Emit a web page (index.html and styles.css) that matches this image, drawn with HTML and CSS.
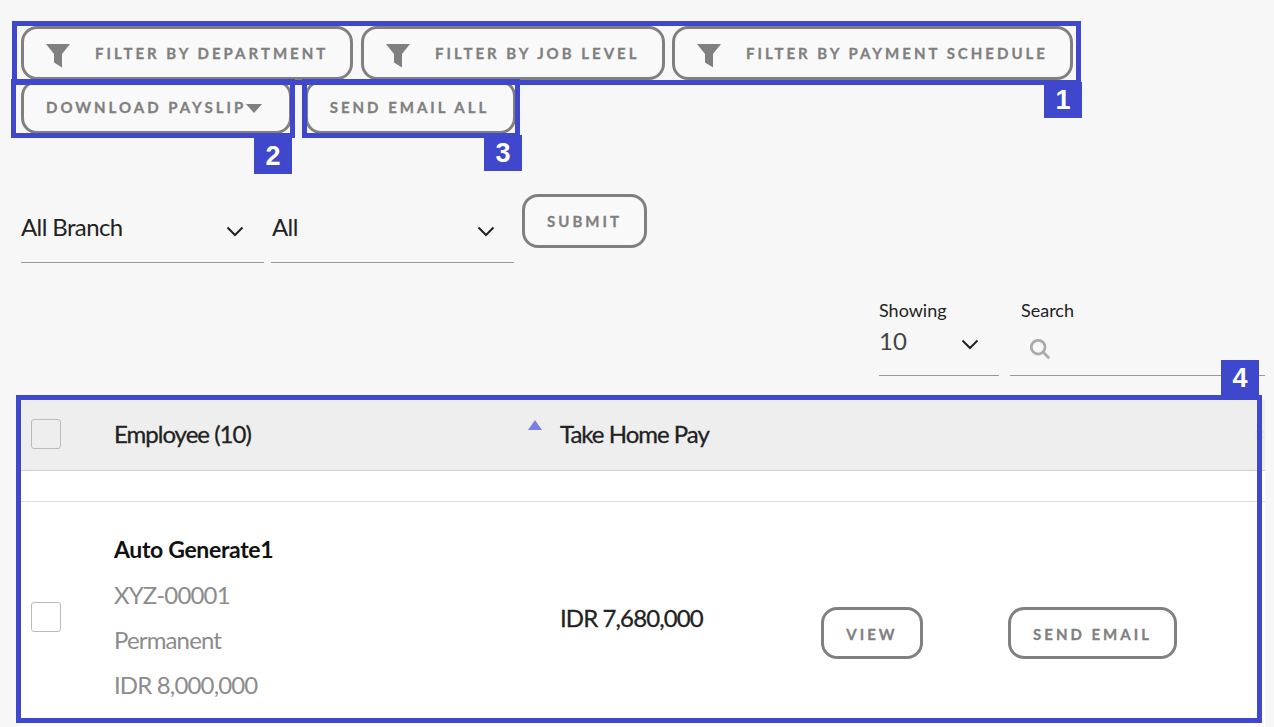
FILE: index.html
```html
<!DOCTYPE html>
<html>
<head>
  <title>Payslip</title>
  <link rel="stylesheet" href="styles.css">
</head>
<body>

<!-- FILTER BUTTONS -->
<div class="btn-row first">
  <button class="btn filter-btn" id="filterDept">
    <svg class="funnel" viewBox="0 0 24 24"><path d="M0 0h24L16 10v13.500l-8-5V10z"/></svg>
    Filter by Department
  </button>
  <button class="btn filter-btn job">
    <svg class="funnel" viewBox="0 0 24 24"><path d="M0 0h24L16 10v13.500l-8-5V10z"/></svg>
    Filter by Job Level
  </button>
  <button class="btn filter-btn schedule">
    <svg class="funnel" viewBox="0 0 24 24"><path d="M0 0h24L16 10v13.500l-8-5V10z"/></svg>
    Filter by Payment Schedule
  </button>
</div>

<div class="btn-row second">
  <button class="btn download-btn">Download Payslip<span class="caret"></span></button>
  <button class="btn send-all-btn">Send Email All</button>
</div>

<!-- BRANCH FORM -->
<div class="branch-form">
  <div class="pick">
    <span>All Branch</span>
    <svg class="chevron" viewBox="0 0 18 11"><path d="M1.500 1.500L9 9l7.500-7.500"/></svg>
  </div>
  <div class="pick">
    <span>All</span>
    <svg class="chevron" viewBox="0 0 18 11"><path d="M1.500 1.500L9 9l7.500-7.500"/></svg>
  </div>
  <button class="btn submit-btn">Submit</button>
</div>

<!-- TABLE TOOLS -->
<div class="table-tools">
  <div class="showing">
    <label>Showing</label>
    <div class="showing-box">
      <span>10</span>
      <svg class="chevron" viewBox="0 0 18 11"><path d="M1.500 1.500L9 9l7.500-7.500"/></svg>
    </div>
  </div>
  <div class="search">
    <label>Search</label>
    <div class="search-box">
      <svg class="search-icon" viewBox="0 0 24 24"><circle cx="10" cy="10" r="7.500"/><path d="M15.500 15.500L22 22"/></svg>
    </div>
  </div>
</div>

<!-- EMPLOYEE TABLE -->
<div class="emp-table">
  <div class="emp-head">
    <div class="cell-check"><span class="check"></span></div>
    <div class="cell-name">Employee (10)</div>
    <div class="cell-pay"><span class="sort-up"></span>Take Home Pay</div>
    <span class="sort-faint"></span>
  </div>
  <div class="emp-spacer"></div>
  <div class="emp-row">
    <div class="cell-check"><span class="check"></span></div>
    <div class="cell-name">
      <div class="emp-name">Auto Generate1</div>
      <div class="emp-sub">XYZ-00001</div>
      <div class="emp-sub">Permanent</div>
      <div class="emp-sub">IDR 8,000,000</div>
    </div>
    <div class="cell-pay pay-value">IDR 7,680,000</div>
    <div class="cell-view"><button class="btn small-btn view-btn">View</button></div>
    <div class="cell-send"><button class="btn small-btn send-btn">Send Email</button></div>
  </div>
</div>

<!-- NUMBERED CALLOUTS -->
<div class="mark mark-1"></div><div class="tag tag-1">1</div>
<div class="mark mark-2"></div><div class="tag tag-2">2</div>
<div class="mark mark-3"></div><div class="tag tag-3">3</div>
<div class="mark mark-4"></div><div class="tag tag-4">4</div>

</body>
</html>
```

FILE: styles.css
```css
html, body {
  margin: 0;
  height: 727px;
  overflow: hidden;
}
body {
  position: relative;
  font-family: 'Lato', 'Liberation Sans', sans-serif;
  background: #f7f7f7;
  color: #222;
}
.btn {
  font-family: 'Lato', sans-serif;
  font-weight: 700;
  font-size: 15px;
  letter-spacing: 3px;
  -webkit-text-stroke: 0.3px #808080;
  text-transform: uppercase;
  color: #808080;
  background: #f9f9f9;
  border: 3px solid #808080;
  border-radius: 16px;
  height: 54px;
  box-sizing: border-box;
  padding: 0;
  white-space: nowrap;
}
.btn-row {
  display: flex;
  padding-left: 21px;
}
.btn-row.first {
  padding-top: 26px;
  gap: 8px;
}
.filter-btn {
  display: flex;
  align-items: center;
  width: 332px;
  padding-left: 22px;
  gap: 25px;
}
.filter-btn.job {
  width: 304px;
}
.filter-btn.schedule {
  width: 401px;
  margin-left: -1px;
}
.funnel {
  width: 24px;
  height: 24px;
  margin-top: 6px;
  fill: #808080;
}
.btn-row.second {
  gap: 13px;
}
.download-btn {
  display: flex;
  align-items: center;
  width: 271px;
  padding-left: 22px;
}
.caret {
  width: 0;
  height: 0;
  margin-top: 2px;
  border-left: 8.500px solid transparent;
  border-right: 8.500px solid transparent;
  border-top: 9px solid #808080;
}
.send-all-btn {
  width: 211px;
  padding-right: 2px;
}
.branch-form {
  display: flex;
  align-items: flex-start;
  gap: 7px;
  margin-top: 60px;
  padding-left: 21px;
}
.pick {
  display: flex;
  justify-content: space-between;
  align-items: center;
  width: 243px;
  height: 69px;
  box-sizing: border-box;
  border-bottom: 1px solid #999;
  font-size: 24px;
  letter-spacing: -0.6px;
  color: #222;
  padding-right: 20px;
}
.pick span {
  margin-bottom: 3px;
}
.pick + .pick span {
  margin-left: 1px;
}
.pick + .pick {
  padding-right: 19px;
}
.pick .chevron {
  margin-top: 6px;
}
.chevron {
  width: 18px;
  height: 11px;
  fill: none;
  stroke: #222;
  stroke-width: 2;
}
.submit-btn {
  width: 125px;
  margin-left: 1px;
}
.table-tools {
  display: flex;
  justify-content: flex-end;
  gap: 11px;
  margin-top: 34px;
  padding-right: 9px;
  font-size: 18px;
  line-height: 26px;
}
.table-tools label {
  display: block;
}
.search label {
  padding-left: 11px;
}
.showing {
  width: 120px;
}
.search {
  width: 255px;
}
.showing-box {
  display: flex;
  justify-content: space-between;
  align-items: flex-start;
  height: 49px;
  border-bottom: 1px solid #999;
  font-size: 24px;
  line-height: 30px;
  color: #444;
  padding-right: 20px;
  padding-top: 3px;
}
.showing-box .chevron {
  margin-top: 13px;
}
.search-box {
  height: 53px;
  box-sizing: border-box;
  border-bottom: 1px solid #999;
  padding: 15px 0 0 19px;
}
.search-icon {
  width: 22px;
  height: 22px;
  fill: none;
  stroke: #aaa;
  stroke-width: 3;
}
.emp-table {
  margin: 24px 9px 0 20px;
  background: #fff;
}
.emp-head {
  position: relative;
  display: flex;
  align-items: center;
  height: 71px;
  box-sizing: border-box;
  padding-bottom: 3px;
  background: #eee;
  border-bottom: 1px solid #ccc;
  font-size: 24px;
  letter-spacing: -1px;
  -webkit-text-stroke: 0.3px #222;
  color: #222;
}
.cell-check {
  width: 94px;
  padding-left: 11px;
  box-sizing: border-box;
  flex: none;
  display: flex;
}
.cell-name {
  width: 446px;
  flex: none;
}
.cell-pay {
  position: relative;
  width: 261px;
  flex: none;
}
.check {
  width: 30px;
  height: 30px;
  box-sizing: border-box;
  border: 1px solid #bbb;
  border-radius: 3px;
}
.sort-up {
  position: absolute;
  left: -32px;
  top: 1px;
  width: 0;
  height: 0;
  border-left: 7px solid transparent;
  border-right: 7px solid transparent;
  border-bottom: 10px solid #7a80e0;
}
.sort-faint {
  position: absolute;
  right: 0;
  top: 27px;
  width: 0;
  height: 0;
  border-left: 5px solid transparent;
  border-right: 5px solid transparent;
  border-bottom: 6px solid #e2e2e2;
}
.sort-faint::after {
  content: "";
  position: absolute;
  left: -5px;
  top: 9px;
  width: 0;
  height: 0;
  border-left: 5px solid transparent;
  border-right: 5px solid transparent;
  border-top: 6px solid #e2e2e2;
}
.emp-spacer {
  height: 30px;
  border-bottom: 1px solid #ddd;
}
.emp-row {
  display: flex;
  height: 225px;
  box-sizing: border-box;
  padding-top: 25px;
}
.emp-row .cell-check {
  padding-top: 75px;
}
.emp-name {
  font-size: 23px;
  letter-spacing: -0.35px;
  font-weight: 700;
  line-height: 45px;
  color: #111;
}
.emp-sub {
  font-size: 24px;
  letter-spacing: -0.85px;
  line-height: 45px;
  color: #8c8c8c;
}
.pay-value {
  font-size: 24px;
  letter-spacing: -0.9px;
  -webkit-text-stroke: 0.3px #222;
  line-height: 30px;
  padding-top: 76px;
  color: #222;
}
.small-btn {
  height: 52px;
  padding-top: 2px;
  background: #fff;
}
.cell-view {
  width: 187px;
  flex: none;
  padding-top: 80px;
}
.view-btn {
  width: 102px;
}
.cell-send {
  padding-top: 80px;
}
.send-btn {
  width: 169px;
}

/* numbered callouts over the page */
.mark {
  position: absolute;
  box-sizing: border-box;
  border: 5px solid #3f48cc;
}
.tag {
  position: absolute;
  width: 38px;
  height: 36px;
  background: #3f48cc;
  color: #fff;
  font-family: 'Liberation Sans', sans-serif;
  font-weight: 700;
  font-size: 27px;
  line-height: 36px;
  text-align: center;
}
.mark-1 { left: 12px; top: 21px; width: 1069px; height: 64px; }
.tag-1 { left: 1044px; top: 82px; }
.mark-2 { left: 11px; top: 79px; width: 284px; height: 59px; }
.tag-2 { left: 254px; top: 138px; }
.mark-3 { left: 302px; top: 79px; width: 218px; height: 59px; }
.tag-3 { left: 484px; top: 135px; }
.mark-4 { left: 16px; top: 395px; width: 1246px; height: 328px; }
.tag-4 { left: 1221px; top: 360px; }
```
